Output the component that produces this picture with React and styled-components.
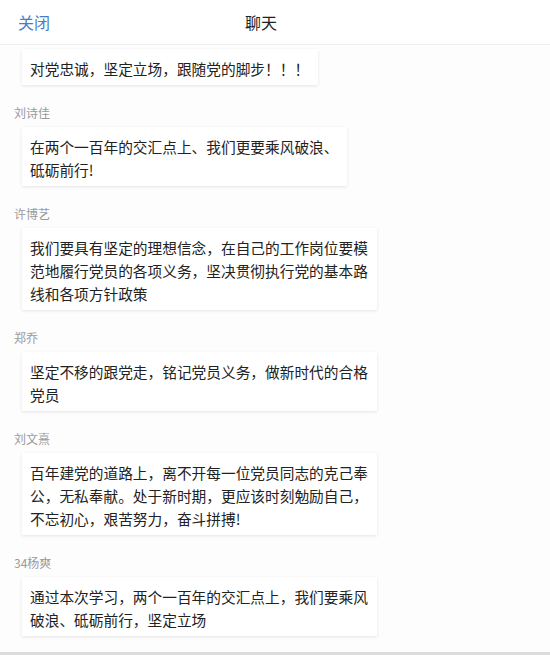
import React from 'react';
import styled, { createGlobalStyle } from 'styled-components';

const GlobalStyle = createGlobalStyle`
  html, body {
    margin: 0;
    padding: 0;
    background: #ffffff;
  }
  body {
    font-family: "Noto Sans CJK SC", "Liberation Sans", sans-serif;
  }
`;

const messages = [
  { name: '', text: '对党忠诚，坚定立场，跟随党的脚步！！！' },
  { name: '刘诗佳', text: '在两个一百年的交汇点上、我们更要乘风破浪、\n砥砺前行!' },
  { name: '许博艺', text: '我们要具有坚定的理想信念，在自己的工作岗位要模\n范地履行党员的各项义务，坚决贯彻执行党的基本路\n线和各项方针政策' },
  { name: '郑乔', text: '坚定不移的跟党走，铭记党员义务，做新时代的合格\n党员' },
  { name: '刘文熹', text: '百年建党的道路上，离不开每一位党员同志的克己奉\n公，无私奉献。处于新时期，更应该时刻勉励自己，\n不忘初心，艰苦努力，奋斗拼搏!' },
  { name: '34杨爽', text: '通过本次学习，两个一百年的交汇点上，我们要乘风\n破浪、砥砺前行，坚定立场' },
];

function App() {
  return (
    <>
      <GlobalStyle />
      <Page>
        <Header>
          <CloseButton>关闭</CloseButton>
          <Title>聊天</Title>
          <span />
        </Header>
        <List>
          {messages.map((m, i) => (
            <Message key={i} first={i === 0}>
              {m.name && <Name>{m.name}</Name>}
              <Bubble>{m.text}</Bubble>
            </Message>
          ))}
        </List>
        <Footer />
      </Page>
    </>
  );
}

export default App;

const Page = styled.div`
  width: 550px;
  height: 655px;
  display: flex;
  flex-direction: column;
  overflow: hidden;
  background: #fdfdfd;
`;

const Header = styled.div`
  height: 45px;
  flex-shrink: 0;
  display: grid;
  grid-template-columns: 1fr auto 1fr;
  align-items: center;
  padding: 0 46px 0 18px;
  background: #ffffff;
  border-bottom: 1px solid #f0f0f0;
  box-sizing: border-box;
`;

const CloseButton = styled.span`
  font-size: 16px;
  color: #4a7dc4;
  cursor: pointer;
`;

const Title = styled.span`
  font-size: 16px;
  color: #222;
`;

const List = styled.div`
  flex: 1;
  overflow: hidden;
  padding-top: 4px;
`;

const Message = styled.div`
  display: flex;
  flex-direction: column;
  align-items: flex-start;
  margin-top: ${p => (p.first ? '0' : '18px')};
`;

const Name = styled.div`
  font-size: 12px;
  line-height: 20px;
  color: #9a9a9a;
  padding-left: 14px;
  margin-bottom: 4px;
`;

const Bubble = styled.div`
  margin-left: 22px;
  padding: 8px 9px 5px 8px;
  background: #ffffff;
  font-size: 14.7px;
  line-height: 23px;
  color: #222;
  white-space: pre-line;
  box-shadow: 0 1px 3px rgba(0, 0, 0, 0.1);
`;

const Footer = styled.div`
  height: 3px;
  flex-shrink: 0;
  background: #dcdcdc;
`;
